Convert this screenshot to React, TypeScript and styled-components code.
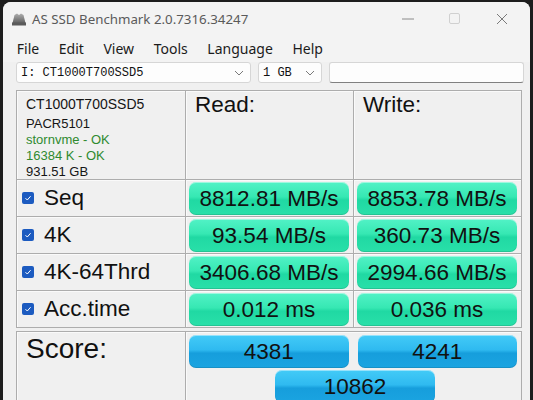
import React from "react";
import styled, { createGlobalStyle } from "styled-components";

const Global = createGlobalStyle`
  html, body { margin: 0; padding: 0; background: #1d1d1d; overflow: hidden; }
  body { font-family: "Liberation Sans", Arial, sans-serif; }
`;

const Window = styled.div`
  margin: 2px 3px 0 3px;
  height: 398px;
  background: #f0f0f0;
  border-radius: 8px 8px 0 0;
  overflow: hidden;
  display: flex;
  flex-direction: column;
  & > * { flex-shrink: 0; }
`;

const TitleBar = styled.div`
  height: 33px;
  background: #f3f3f3;
  display: flex;
  align-items: center;
  padding-left: 8px;
  font-family: "Noto Sans", "Open Sans", sans-serif;
  font-size: 13.3px;
  color: #5a5a5a;
`;

const TitleText = styled.span`
  margin-left: 5px;
  margin-top: 1px;
  flex: 1;
`;

const Controls = styled.div`
  display: flex;
  align-items: center;
  height: 100%;
  padding-right: 5px;
`;

const CtrlBtn = styled.div`
  width: 47px;
  height: 100%;
  display: flex;
  align-items: center;
  justify-content: center;
`;

const MenuBar = styled.div`
  height: 27px;
  background: #f3f3f3;
  display: flex;
  align-items: center;
  padding-left: 4px;
  font-family: "Noto Sans", "Open Sans", sans-serif;
  font-size: 14px;
  color: #1b1b1b;
`;

const MenuItem = styled.span`
  padding: 0 9.8px;
`;

const ComboRow = styled.div`
  display: flex;
  align-items: center;
  gap: 7px;
  margin: 0 0 0 13px;
  height: 21px;
`;

const Combo = styled.div<{ $w: number }>`
  width: ${(p) => p.$w}px;
  height: 21px;
  box-sizing: border-box;
  background: #fdfdfd;
  border: 1px solid #d6d6d6;
  border-radius: 3px;
  display: flex;
  align-items: center;
  justify-content: space-between;
  padding: 0 6px 0 4px;
  font-family: "Liberation Mono", "DejaVu Sans Mono", monospace;
  font-size: 12px;
  color: #111;
`;

const TextBox = styled.div`
  width: 195px;
  height: 21px;
  box-sizing: border-box;
  background: #fdfdfd;
  border: 1px solid #d6d6d6;
  border-bottom: 1px solid #808080;
  border-radius: 3px;
`;

const Grid = styled.div`
  margin: 7px 0 0 13px;
  display: grid;
  grid-template-columns: 169px 168px 168px;
  grid-template-rows: 89px repeat(4, 37px);
  border-top: 1px solid #adadad;
  border-left: 1px solid #adadad;
  width: 505px;
`;

const Cell = styled.div`
  border-right: 1px solid #adadad;
  border-bottom: 1px solid #adadad;
  box-shadow: inset 1px 1px 0 #fafafa;
  display: flex;
  align-items: center;
  min-width: 0;
`;

const InfoCell = styled(Cell)`
  flex-direction: column;
  align-items: flex-start;
  justify-content: flex-start;
  padding: 2px 0 0 9px;
`;

const InfoLine = styled.div<{ $big?: boolean; $ok?: boolean }>`
  font-size: ${(p) => (p.$big ? 14 : 13)}px;
  line-height: ${(p) => (p.$big ? 22 : 16)}px;
  margin-bottom: ${(p) => (p.$big ? 1 : 0)}px;
  color: ${(p) => (p.$ok ? "#2f8a2f" : "#151515")};
`;

const HeadCell = styled(Cell)`
  align-items: flex-start;
  padding: 1px 0 0 9px;
  font-size: 22.5px;
  color: #111;
`;

const LabelCell = styled(Cell)`
  padding-left: 5px;
  gap: 10px;
  font-size: 22.5px;
  color: #111;
`;

const Check = styled.span`
  width: 12px;
  height: 12px;
  border-radius: 2px;
  background: #1c5bc0;
  display: inline-flex;
  align-items: center;
  justify-content: center;
  flex: none;
`;

const ValueCell = styled(Cell)`
  padding: 2px 4px 1px 3px;
  align-items: stretch;
`;

const Bar = styled.div<{ $blue?: boolean }>`
  flex: 1;
  border-radius: 7px;
  display: flex;
  align-items: center;
  justify-content: center;
  font-size: 22.5px;
  color: #111;
  background: ${(p) =>
    p.$blue
      ? "linear-gradient(#43cbf7 0%, #2fbaf0 45%, #169edc 55%, #1ba4e1 100%)"
      : "linear-gradient(#52f2c6 0%, #36e8b3 45%, #20d9a3 55%, #29e0a9 100%)"};
  box-shadow: inset 0 1px 0 rgba(255,255,255,0.45), inset 0 -1px 0 rgba(0,0,0,0.12);
`;

const ScoreGrid = styled.div`
  margin: 3px 0 0 13px;
  width: 505px;
  display: grid;
  grid-template-columns: 169px 336px;
  border-top: 1px solid #adadad;
  border-left: 1px solid #adadad;
  flex: 1;
`;

const ScoreLabel = styled(Cell)`
  align-items: flex-start;
  padding: 1px 0 0 9px;
  font-size: 28px;
  color: #111;
`;

const ScoreArea = styled(Cell)`
  flex-direction: column;
  align-items: stretch;
  justify-content: flex-start;
  padding: 3px 4px 0 3px;
  gap: 2px;
`;

const ScoreRow = styled.div`
  display: flex;
  gap: 9px;
  height: 33px;
`;

const TotalRow = styled.div`
  display: flex;
  justify-content: center;
  height: 33px;
  padding-left: 4px;
`;

const TotalBar = styled(Bar)`
  flex: none;
  width: 160px;
`;

const Chevron = () => (
  <svg width="10" height="6" viewBox="0 0 10 6">
    <path d="M1 1l4 4 4-4" fill="none" stroke="#7a7a7a" strokeWidth="1" />
  </svg>
);

const Tick = () => (
  <svg width="8" height="8" viewBox="0 0 8 8">
    <path d="M1.5 4.2l1.8 1.8L6.6 2.2" fill="none" stroke="#fff" strokeWidth="1" />
  </svg>
);

const rows = [
  { label: "Seq", r: "8812.81 MB/s", w: "8853.78 MB/s" },
  { label: "4K", r: "93.54 MB/s", w: "360.73 MB/s" },
  { label: "4K-64Thrd", r: "3406.68 MB/s", w: "2994.66 MB/s" },
  { label: "Acc.time", r: "0.012 ms", w: "0.036 ms" },
];

export default function App() {
  return (
    <>
      <Global />
      <Window>
        <TitleBar>
          <svg width="16" height="14" viewBox="0 0 16 14">
            <defs>
              <linearGradient id="ig" x1="0" y1="0" x2="0" y2="1">
                <stop offset="0" stopColor="#b0b0b0" />
                <stop offset="1" stopColor="#505050" />
              </linearGradient>
            </defs>
            <path d="M1 13L3.5 3 6 1.5 8 3l2-1.5 2.5 1.5L15 13z" fill="url(#ig)" />
            <rect x="1" y="10.5" width="14" height="3" fill="#5a5a5a" />
          </svg>
          <TitleText>AS SSD Benchmark 2.0.7316.34247</TitleText>
          <Controls>
            <CtrlBtn>
              <svg width="12" height="2" viewBox="0 0 12 2">
                <path d="M0 1h12" stroke="#8a8a8a" strokeWidth="1" />
              </svg>
            </CtrlBtn>
            <CtrlBtn>
              <svg width="11" height="11" viewBox="0 0 11 11">
                <rect x="0.5" y="0.5" width="10" height="10" rx="1.5" fill="none" stroke="#d0d0d0" />
              </svg>
            </CtrlBtn>
            <CtrlBtn>
              <svg width="12" height="12" viewBox="0 0 12 12">
                <path d="M1 1l10 10M11 1L1 11" stroke="#7a7a7a" strokeWidth="1" />
              </svg>
            </CtrlBtn>
          </Controls>
        </TitleBar>
        <MenuBar>
          {["File", "Edit", "View", "Tools", "Language", "Help"].map((m) => (
            <MenuItem key={m}>{m}</MenuItem>
          ))}
        </MenuBar>
        <ComboRow>
          <Combo $w={235}>
            <span>I: CT1000T700SSD5</span>
            <Chevron />
          </Combo>
          <Combo $w={64}>
            <span>1 GB</span>
            <Chevron />
          </Combo>
          <TextBox />
        </ComboRow>
        <Grid>
          <InfoCell>
            <InfoLine $big>CT1000T700SSD5</InfoLine>
            <InfoLine>PACR5101</InfoLine>
            <InfoLine $ok>stornvme - OK</InfoLine>
            <InfoLine $ok>16384 K - OK</InfoLine>
            <InfoLine>931.51 GB</InfoLine>
          </InfoCell>
          <HeadCell>Read:</HeadCell>
          <HeadCell>Write:</HeadCell>
          {rows.map((row) => (
            <React.Fragment key={row.label}>
              <LabelCell>
                <Check>
                  <Tick />
                </Check>
                {row.label}
              </LabelCell>
              <ValueCell>
                <Bar>{row.r}</Bar>
              </ValueCell>
              <ValueCell>
                <Bar>{row.w}</Bar>
              </ValueCell>
            </React.Fragment>
          ))}
        </Grid>
        <ScoreGrid>
          <ScoreLabel>Score:</ScoreLabel>
          <ScoreArea>
            <ScoreRow>
              <Bar $blue>4381</Bar>
              <Bar $blue>4241</Bar>
            </ScoreRow>
            <TotalRow>
              <TotalBar $blue>10862</TotalBar>
            </TotalRow>
          </ScoreArea>
        </ScoreGrid>
      </Window>
    </>
  );
}
